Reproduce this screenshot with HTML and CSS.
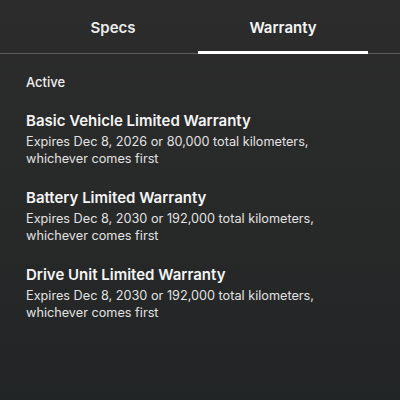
FILE: index.html
```html
<!DOCTYPE html>
<html>
<head>
<meta charset="utf-8">
<link rel="stylesheet" href="styles.css">
</head>
<body>
<div class="tabs">
  <div class="tab">Specs</div>
  <div class="tab active">Warranty</div>
</div>
<main class="content">
  <div class="status">Active</div>
  <section class="item">
    <h2 class="title">Basic Vehicle Limited Warranty</h2>
    <p class="desc">Expires Dec 8, 2026 or 80,000 total kilometers,<br>whichever comes first</p>
  </section>
  <section class="item">
    <h2 class="title">Battery Limited Warranty</h2>
    <p class="desc">Expires Dec 8, 2030 or 192,000 total kilometers,<br>whichever comes first</p>
  </section>
  <section class="item">
    <h2 class="title">Drive Unit Limited Warranty</h2>
    <p class="desc">Expires Dec 8, 2030 or 192,000 total kilometers,<br>whichever comes first</p>
  </section>
</main>
</body>
</html>
```
FILE: styles.css
```css
html, body {
  margin: 0;
  padding: 0;
  height: 100%;
}
body {
  background: linear-gradient(180deg, #2c2c2c 0%, #282929 50%, #222526 100%);
  font-family: Inter, "Noto Sans", sans-serif;
  color: #f2f2f2;
  width: 400px;
  height: 400px;
  overflow: hidden;
}
.tabs {
  display: flex;
  padding: 0 32px 0 28px;
  height: 53px;
  border-bottom: 1px solid #5c5c5c;
}
.tab {
  flex: 0 0 170px;
  display: flex;
  align-items: center;
  justify-content: center;
  position: relative;
  font-size: 15px;
  font-weight: 600;
  color: #ececec;
  padding-top: 1px;
}
.tab.active {
  color: #f6f6f6;
}
.tab.active::after {
  content: "";
  position: absolute;
  left: 0;
  right: 0;
  bottom: -1px;
  height: 3px;
  background: #ffffff;
}
.content {
  padding: 20px 26px 0 26px;
}
.status {
  font-size: 13px;
  line-height: 16px;
  font-weight: 500;
  color: #f0f0f0;
  margin-bottom: 21px;
}
.item {
  margin-bottom: 21px;
}
.title {
  margin: 0;
  font-size: 15px;
  line-height: 20px;
  font-weight: 600;
  color: #f4f4f4;
}
.desc {
  margin: 3px 0 0 0;
  font-size: 12.7px;
  line-height: 16.5px;
  font-weight: 400;
  color: #e2e2e2;
}
```
